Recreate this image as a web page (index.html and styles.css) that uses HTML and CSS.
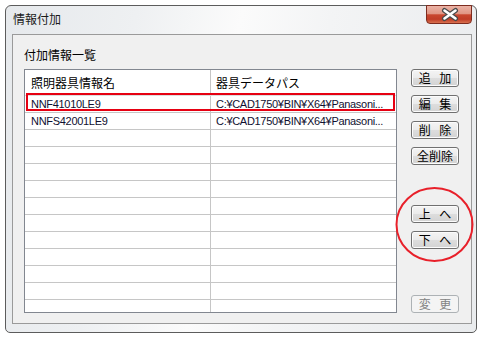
FILE: index.html
```html
<!DOCTYPE html>
<html lang="ja">
<head>
  <meta charset="UTF-8" />
  <title>情報付加</title>
  <link rel="stylesheet" href="styles.css">
</head>
<body>

<div class="window">
  <div class="titlebar">
    <span class="title">情報付加</span>
    <div class="close">
      <svg width="46" height="18" viewBox="0 0 46 18">
        <path d="M17.5 4.5 L28.5 12.5 M28.5 4.5 L17.5 12.5" stroke="#4a4a4a" stroke-width="5" stroke-linecap="round" fill="none"/>
        <path d="M17.5 4.5 L28.5 12.5 M28.5 4.5 L17.5 12.5" stroke="#ffffff" stroke-width="2.6" stroke-linecap="round" fill="none"/>
      </svg>
    </div>
  </div>

  <div class="client">
    <div class="caption">付加情報一覧</div>
    <div class="panel">
      <div class="list">
        <div class="list-head">
          <div class="cell">照明器具情報名</div>
          <div class="cell">器具データパス</div>
        </div>
        <div class="row">
          <div class="cell">NNF41010LE9</div>
          <div class="cell">C:¥CAD1750¥BIN¥X64¥Panasoni...</div>
        </div>
        <div class="row">
          <div class="cell">NNFS42001LE9</div>
          <div class="cell">C:¥CAD1750¥BIN¥X64¥Panasoni...</div>
        </div>
        <div class="row"><div class="cell"></div><div class="cell"></div></div>
        <div class="row"><div class="cell"></div><div class="cell"></div></div>
        <div class="row"><div class="cell"></div><div class="cell"></div></div>
        <div class="row"><div class="cell"></div><div class="cell"></div></div>
        <div class="row"><div class="cell"></div><div class="cell"></div></div>
        <div class="row"><div class="cell"></div><div class="cell"></div></div>
        <div class="row"><div class="cell"></div><div class="cell"></div></div>
        <div class="row"><div class="cell"></div><div class="cell"></div></div>
        <div class="row"><div class="cell"></div><div class="cell"></div></div>
        <div class="row"><div class="cell"></div><div class="cell"></div></div>
        <div class="row"><div class="cell"></div><div class="cell"></div></div>
      </div>

      <div class="buttons">
        <button class="btn">追 加</button>
        <button class="btn">編 集</button>
        <button class="btn">削 除</button>
        <button class="btn">全削除</button>
        <button class="btn btn-gap">上 へ</button>
        <button class="btn">下 へ</button>
        <button class="btn btn-last" disabled>変 更</button>
      </div>
    </div>
  </div>

  <div class="mark-row"></div>
  <svg class="mark-circle" width="84" height="80" viewBox="0 0 84 80">
    <ellipse cx="40.5" cy="39.5" rx="38" ry="36.5" fill="none" stroke="#e8202a" stroke-width="2"/>
  </svg>
</div>

</body>
</html>
```

FILE: styles.css
```css
body {
  margin: 0;
  background: #fff;
  font-family: "Noto Sans CJK JP", sans-serif;
  font-size: 12px;
  color: #000;
}
.window {
  position: relative;
  box-sizing: border-box;
  width: 472px;
  height: 328px;
  margin: 5px 0 0 5px;
  border: 1px solid #5c5c5c;
  border-radius: 6px 6px 5px 5px;
  background: linear-gradient(100deg, #e6e9ec 0%, #eef0f2 25%, #fbfbfb 45%, #f3f4f5 62%, #e9ebed 100%);
}
.titlebar {
  display: flex;
  justify-content: space-between;
  align-items: flex-start;
  height: 28px;
}
.title {
  padding: 4px 0 0 7px;
  line-height: 17px;
  color: #1a1a1a;
}
.close {
  box-sizing: border-box;
  width: 46px;
  height: 19px;
  margin: -1px 4px 0 0;
  border: 1px solid #7d2c1f;
  border-radius: 0 0 4px 4px;
  background: linear-gradient(#ebb3a6 0%, #e19684 45%, #c9472f 52%, #c03d27 78%, #d9714f 100%);
}
.close svg {
  display: block;
}
.client {
  box-sizing: border-box;
  width: 460px;
  height: 290px;
  margin-left: 6px;
  padding: 12px 12px 10px 11px;
  border: 1px solid #9a9a9a;
  background: #f0f0f0;
}
.caption {
  line-height: 16px;
  margin-bottom: 6px;
}
.panel {
  display: flex;
  gap: 14px;
  height: 244px;
}
.list {
  box-sizing: border-box;
  width: 373px;
  height: 244px;
  border: 1px solid #828790;
  background: #fff;
  overflow: hidden;
}
.list-head, .row {
  display: flex;
  box-sizing: border-box;
  border-bottom: 1px solid #c6c6c6;
}
.list-head {
  height: 26px;
  line-height: 25px;
  border-bottom-color: #dedede;
}
.row {
  height: 17px;
  line-height: 16px;
  font-family: "Liberation Sans", Arial, sans-serif;
  font-size: 11px;
  letter-spacing: -0.3px;
  color: #101030;
}
.cell {
  box-sizing: border-box;
  width: 186px;
  padding-left: 6px;
  border-right: 1px solid #c6c6c6;
  white-space: nowrap;
  overflow: hidden;
}
.cell + .cell {
  flex: 1;
  border-right: none;
  padding-left: 5px;
}
.buttons {
  display: flex;
  flex-direction: column;
  gap: 8px;
  width: 48px;
}
.btn {
  box-sizing: border-box;
  height: 18px;
  padding: 0;
  border: 1px solid #707070;
  border-radius: 3px;
  background: linear-gradient(#f4f4f4 0%, #ebebeb 48%, #dddddd 52%, #d3d3d3 100%);
  box-shadow: inset 0 0 0 1px #fcfcfc;
  font-family: "Noto Sans CJK JP", sans-serif;
  font-size: 12px;
  line-height: 16px;
  word-spacing: 6px;
  color: #000;
}
.btn-gap {
  margin-top: 32px;
}
.btn-last {
  margin-top: auto;
}
.btn:disabled {
  border-color: #adb2b5;
  background: #f4f4f4;
  box-shadow: none;
  color: #838383;
}
.mark-row {
  position: absolute;
  left: 20px;
  top: 87px;
  box-sizing: border-box;
  width: 369px;
  height: 18px;
  border: 2px solid #e60012;
}
.mark-circle {
  position: absolute;
  left: 388px;
  top: 179px;
}
```
